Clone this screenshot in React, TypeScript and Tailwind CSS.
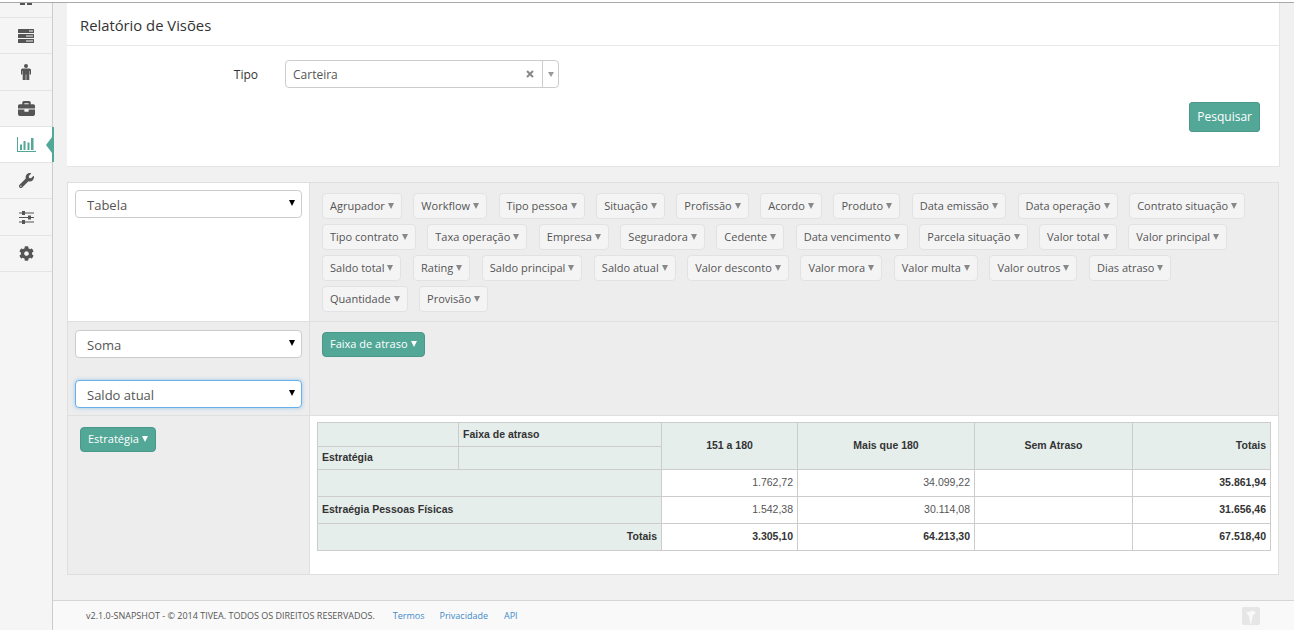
import { FaBriefcase, FaCog, FaWrench } from "react-icons/fa";

const tagRows = [
  ["Agrupador", "Workflow", "Tipo pessoa", "Situação", "Profissão", "Acordo", "Produto", "Data emissão", "Data operação", "Contrato situação"],
  ["Tipo contrato", "Taxa operação", "Empresa", "Seguradora", "Cedente", "Data vencimento", "Parcela situação", "Valor total", "Valor principal"],
  ["Saldo total", "Rating", "Saldo principal", "Saldo atual", "Valor desconto", "Valor mora", "Valor multa", "Valor outros", "Dias atraso"],
  ["Quantidade", "Provisão"],
];

const rows = [
  { label: "", values: ["1.762,72", "34.099,22", "", "35.861,94"] },
  { label: "Estraégia Pessoas Físicas", values: ["1.542,38", "30.114,08", "", "31.656,46"] },
];

function ServerIcon() {
  return (
    <svg width="16" height="14" viewBox="0 0 16 14" fill="#555">
      <rect width="16" height="4" rx="0.5" />
      <rect y="5" width="16" height="4" rx="0.5" />
      <rect y="10" width="16" height="4" rx="0.5" />
      <path d="M11 1.500h4v1h-4zM8 6.500h7v1H8zM8 11.500h7v1H8z" fill="#f5f5f5" />
    </svg>
  );
}

function PersonIcon() {
  return (
    <svg width="10" height="16" viewBox="0 0 10 16" fill="#555">
      <circle cx="5" cy="2" r="2" />
      <path d="M1.500 4.500h7A1.500 1.500 0 0 1 10 6v4.500H8.700V7h-.4v9H5.300v-5.500h-.6V16H1.700V7h-.4v3.500H0V6a1.500 1.500 0 0 1 1.500-1.500z" />
    </svg>
  );
}

function ChartIcon() {
  return (
    <svg width="19" height="15" viewBox="0 0 19 15" fill="#52a797">
      <path d="M0 0h1v14h18v1H0z" />
      <path d="M3 7.500h2V13H3zM6.500 4h2v9h-2zM10.500 5.500h2V13h-2zM14 1h2.500v12H14z" />
    </svg>
  );
}

function SlidersIcon() {
  return (
    <svg width="15" height="13" viewBox="0 0 15 13" fill="#555">
      <path d="M0 1.500h15v1H0zM0 6h15v1H0zM0 10.500h15v1H0z" />
      <path d="M3 0h3v4H3zM9 4.500h3v4H9zM3 9h3v4H3z" />
    </svg>
  );
}

function LogoMark() {
  return (
    <svg width="18" height="21" viewBox="0 0 18 21">
      <rect width="18" height="18" rx="2" fill="#e6e6e6" />
      <path d="M4 5.500 11 3.500 14 6 11 8 9.500 15 8.500 18 8 15 7 9z" fill="#f9f9f9" />
      <path d="M9 18.500h1l-.5 2z" fill="#eeeeee" />
    </svg>
  );
}

function SideItem({ children, active = false }: { children: React.ReactNode; active?: boolean }) {
  return (
    <div className={`relative flex h-[36.3px] items-center justify-center border-b border-[#e4e4e4] ${active ? "bg-white" : ""}`}>
      {children}
      {active && (
        <div className="absolute right-[-2px] top-0 flex h-full items-center border-r-2 border-[#52a797]">
          <div className="h-0 w-0 border-y-[8px] border-r-[6px] border-y-transparent border-r-[#52a797]" />
        </div>
      )}
    </div>
  );
}

function Tag({ label, active = false }: { label: string; active?: boolean }) {
  return (
    <span className={`inline-flex items-center whitespace-nowrap rounded-[4px] border pl-[7px] pr-[7px] text-[11px] ${active ? "h-[25px] border-[#4a9889] bg-[#52a797] text-white" : "h-[26px] border-[#e2e2e2] bg-[#f4f4f4] text-[#555]"}`}>
      {label}
      <span className={`ml-[3px] h-0 w-0 border-x-[3px] border-t-[6px] border-x-transparent ${active ? "border-t-white" : "border-t-[#888]"}`} />
    </span>
  );
}

function PivotSelect({ value, focused = false }: { value: string; focused?: boolean }) {
  return (
    <div className="relative h-[28px] w-[227px]">
      <select
        defaultValue={value}
        className={`h-full w-full appearance-none rounded-[4px] border bg-white pl-[11px] pt-[3px] text-[13px] text-[#555] outline-none ${focused ? "border-[#66afe9] shadow-[0_0_4px_rgba(102,175,233,0.6)]" : "border-[#ccc]"}`}
      >
        <option>{value}</option>
      </select>
      <span className="pointer-events-none absolute right-[7px] top-[10px] h-0 w-0 border-x-[3px] border-t-[6px] border-x-transparent border-t-black" />
    </div>
  );
}

export default function App() {
  return (
    <div className="flex h-[630px] w-[1294px] flex-col overflow-hidden bg-[#f1f1f1] font-['Open_Sans',sans-serif]">
      <div className="h-[3px] border-b border-[#aaa] bg-white" />
      <div className="flex min-h-0 flex-1">
        <aside className="w-[53px] shrink-0 border-r border-[#ccc] bg-[#f5f5f5]">
          <div className="flex h-[15px] items-start justify-center gap-[2px] overflow-hidden border-b border-[#e4e4e4]">
            <div className="h-[2px] w-[5px] bg-[#555]" />
            <div className="h-[2px] w-[5px] bg-[#555]" />
          </div>
          <SideItem><ServerIcon /></SideItem>
          <SideItem><PersonIcon /></SideItem>
          <SideItem><FaBriefcase className="text-[17px] text-[#555]" /></SideItem>
          <SideItem active><ChartIcon /></SideItem>
          <SideItem><FaWrench className="text-[15px] text-[#555]" /></SideItem>
          <SideItem><SlidersIcon /></SideItem>
          <SideItem><FaCog className="text-[15px] text-[#555]" /></SideItem>
        </aside>

        <div className="flex min-w-0 flex-1 flex-col">
          <main className="flex-1 pl-[14px]">
            <section className="h-[164px] w-[1213px] border-b border-r border-[#e5e5e5] bg-white">
              <div className="flex h-[43px] items-center border-b border-[#e8e8e8] pl-[13px] pt-[3px] text-[14.8px] text-[#333]">
                Relatório de Visões
              </div>
              <div className="flex items-center pt-[14px]">
                <label className="w-[191px] pt-[2px] text-right text-[12px] text-[#333]">Tipo</label>
                <div className="ml-[27px] flex h-[28px] w-[274px] items-center rounded-[4px] border border-[#ccc] text-[12px] text-[#555]">
                  <span className="flex-1 pl-[7px] pt-[2px]">Carteira</span>
                  <svg width="8" height="8" viewBox="0 0 8 8" className="mr-[8px]">
                    <path d="M1 1l6 6M7 1l-6 6" stroke="#888" strokeWidth="2" />
                  </svg>
                  <span className="flex h-full w-[16px] items-center justify-center border-l border-[#ccc]">
                    <span className="h-0 w-0 border-x-[3px] border-t-[5px] border-x-transparent border-t-[#999]" />
                  </span>
                </div>
              </div>
              <div className="flex justify-end pr-[19px] pt-[14px]">
                <button className="h-[30px] rounded-[3px] border border-[#4a9889] bg-[#52a797] px-[7px] text-[12px] text-white">
                  Pesquisar
                </button>
              </div>
            </section>

            <section className="mt-[15px] grid h-[393px] w-[1212px] grid-cols-[242px_1fr] grid-rows-[139px_94px_1fr] border border-[#dfdfdf] bg-[#ededed]">
              <div className="border-b border-r border-[#dfdfdf] bg-white pl-[7px] pt-[7px]">
                <PivotSelect value="Tabela" />
              </div>
              <div className="flex flex-col gap-[5px] border-b border-[#dfdfdf] px-[12px] pt-[10px]">
                {tagRows.map((row) => (
                  <div key={row[0]} className="flex gap-[11.5px]">
                    {row.map((t) => <Tag key={t} label={t} />)}
                  </div>
                ))}
              </div>

              <div className="flex flex-col gap-[22px] border-b border-r border-[#dfdfdf] pl-[7px] pt-[8px]">
                <PivotSelect value="Soma" />
                <PivotSelect value="Saldo atual" focused />
              </div>
              <div className="border-b border-[#dfdfdf] px-[12px] pt-[8px]">
                <Tag label="Faixa de atraso" active />
              </div>

              <div className="border-r border-[#dfdfdf] pl-[12px] pt-[9px]">
                <Tag label="Estratégia" active />
              </div>
              <div className="bg-white pl-[7px] pt-[6px]">
                <table className="w-[953px] table-fixed border-collapse border border-[#ccc] font-['Liberation_Sans',sans-serif] text-[10.5px] text-[#333]">
                  <colgroup>
                    <col className="w-[141px]" />
                    <col className="w-[203px]" />
                    <col className="w-[136px]" />
                    <col className="w-[177px]" />
                    <col className="w-[158px]" />
                    <col className="w-[138px]" />
                  </colgroup>
                  <thead className="bg-[#e6eeec] font-bold">
                    <tr className="h-[24px]">
                      <th className="border border-[#ccc]" />
                      <th className="border border-[#ccc] px-[4px] text-left">Faixa de atraso</th>
                      <th rowSpan={2} className="border border-[#ccc] px-[4px] text-center">151 a 180</th>
                      <th rowSpan={2} className="border border-[#ccc] px-[4px] text-center">Mais que 180</th>
                      <th rowSpan={2} className="border border-[#ccc] px-[4px] text-center">Sem Atraso</th>
                      <th rowSpan={2} className="border border-[#ccc] px-[4px] text-right">Totais</th>
                    </tr>
                    <tr className="h-[23px]">
                      <th className="border border-[#ccc] px-[4px] text-left">Estratégia</th>
                      <th className="border border-[#ccc]" />
                    </tr>
                  </thead>
                  <tbody>
                    {rows.map((r) => (
                      <tr key={r.values[0]} className="h-[27px]">
                        <th colSpan={2} className="border border-[#ccc] bg-[#e6eeec] px-[4px] text-left font-bold">{r.label}</th>
                        {r.values.map((v, i) => (
                          <td key={i} className={`border border-[#ccc] px-[4px] text-right ${i === 3 ? "font-bold" : "text-[#555]"}`}>{v}</td>
                        ))}
                      </tr>
                    ))}
                    <tr className="h-[27px] font-bold">
                      <th colSpan={2} className="border border-[#ccc] bg-[#e6eeec] px-[4px] text-right">Totais</th>
                      <td className="border border-[#ccc] px-[4px] text-right">3.305,10</td>
                      <td className="border border-[#ccc] px-[4px] text-right">64.213,30</td>
                      <td className="border border-[#ccc] px-[4px] text-right" />
                      <td className="border border-[#ccc] px-[4px] text-right">67.518,40</td>
                    </tr>
                  </tbody>
                </table>
              </div>
            </section>
          </main>

          <footer className="flex h-[30px] shrink-0 items-center border-t border-[#d5d5d5] bg-[#f9f9f9] pl-[33px] pr-[34px] text-[9px] text-[#555]">
            <span>v2.1.0-SNAPSHOT - © 2014 TIVEA. TODOS OS DIREITOS RESERVADOS.</span>
            <a className="ml-[18px] text-[#428bca]">Termos</a>
            <a className="ml-[15px] text-[#428bca]">Privacidade</a>
            <a className="ml-[16px] text-[#428bca]">API</a>
            <span className="ml-auto mt-[3px]"><LogoMark /></span>
          </footer>
        </div>
      </div>
    </div>
  );
}
